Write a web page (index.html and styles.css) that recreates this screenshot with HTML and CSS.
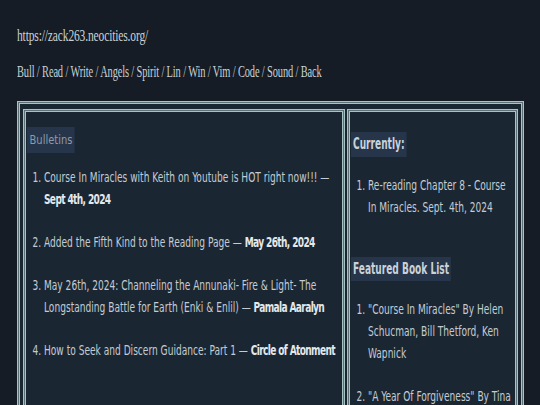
FILE: index.html
```html
<!DOCTYPE html>
<html>
<head>
<meta charset="utf-8">
<link rel="stylesheet" href="styles.css">
</head>
<body>
<header class="top">
  <p class="url">https://zack263.neocities.org/</p>
  <nav class="nav">Bull / Read / Write / Angels / Spirit / Lin / Win / Vim / Code / Sound / Back</nav>
</header>
<div class="frame">
  <section class="col col-main">
    <h2 class="label label-small">Bulletins</h2>
    <ol class="list">
      <li>Course In Miracles with Keith on Youtube is HOT right now!!! — <b>Sept 4th, 2024</b></li>
      <li>Added the Fifth Kind to the Reading Page — <b>May 26th, 2024</b></li>
      <li>May 26th, 2024: Channeling the Annunaki- Fire &amp; Light- The Longstanding Battle for Earth (Enki &amp; Enlil) — <b>Pamala Aaralyn</b></li>
      <li>How to Seek and Discern Guidance: Part 1 — <b>Circle of Atonment</b></li>
    </ol>
  </section>
  <aside class="col col-side">
    <h2 class="label">Currently:</h2>
    <ol class="list list-side">
      <li>Re-reading Chapter 8 - Course In Miracles. Sept. 4th, 2024</li>
    </ol>
    <h2 class="label label-next">Featured Book List</h2>
    <ol class="list list-side">
      <li>"Course In Miracles" By Helen Schucman, Bill Thetford, Ken Wapnick</li>
      <li>"A Year Of Forgiveness" By Tina Louise Spalding</li>
    </ol>
  </aside>
</div>
</body>
</html>
```
FILE: styles.css
```css
html, body {
  margin: 0;
  background: #151c25;
}
body {
  padding: 27px 17px 0 17px;
  font-family: "DejaVu Sans Condensed", "DejaVu Sans", sans-serif;
  color: #c3ccd2;
  overflow: hidden;
  height: 405px;
  box-sizing: border-box;
}
.top {
  font-family: "Liberation Serif", serif;
  color: #c8d1d5;
  font-size: 16px;
  line-height: 18px;
}
.url {
  margin: 0;
  width: max-content;
  transform: scaleX(0.72);
  transform-origin: 0 50%;
  letter-spacing: -0.2px;
}
.nav {
  margin-top: 18px;
  width: max-content;
  transform: scaleX(0.65);
  transform-origin: 0 50%;
  letter-spacing: -0.2px;
}
.frame {
  margin-top: 20px;
  width: 507px;
  box-sizing: border-box;
  border: 3px double #a9c2c3;
  background: linear-gradient(#1b2633, #1b2633) padding-box, #5d7276;
  padding: 5px 3px 3px;
  display: flex;
  gap: 2px;
  height: 320px;
}
.col {
  border: 3px double #a9c2c3;
  background: linear-gradient(#1b2633, #1b2633) padding-box, #5d7276;
  box-sizing: border-box;
  height: 400px;
}
.col-main {
  width: 323px;
  padding: 15px 1px 0;
}
.col-side {
  width: 171px;
  padding: 20px 1px 0;
}
.label {
  display: block;
  width: max-content;
  margin: 0;
  background: #26354a;
  font-size: 15px;
  font-weight: bold;
  line-height: 19px;
  padding: 3px 3px;
  color: #c9d2d9;
  transform: scaleX(0.67);
  transform-origin: 0 50%;
}
.label-small {
  font-size: 13px;
  font-weight: normal;
  color: #8d9aaa;
  line-height: 18px;
  padding: 4px 3px;
  transform: scaleX(0.85);
}
.label-next {
  margin-top: 39px;
  line-height: 18px;
}
.list {
  margin: 13px 0 0;
  padding-left: 23.6px;
  box-sizing: border-box;
  width: calc(100% / 0.72);
  transform: scaleX(0.72);
  transform-origin: 0 0;
  font-family: "DejaVu Sans Condensed", "DejaVu Sans", sans-serif;
  font-size: 14px;
  line-height: 22px;
}
.list li {
  margin-bottom: 21px;
}
.list b {
  color: #e3e8eb;
  letter-spacing: -0.9px;
}
.list-side {
  margin-top: 17px;
}
```
